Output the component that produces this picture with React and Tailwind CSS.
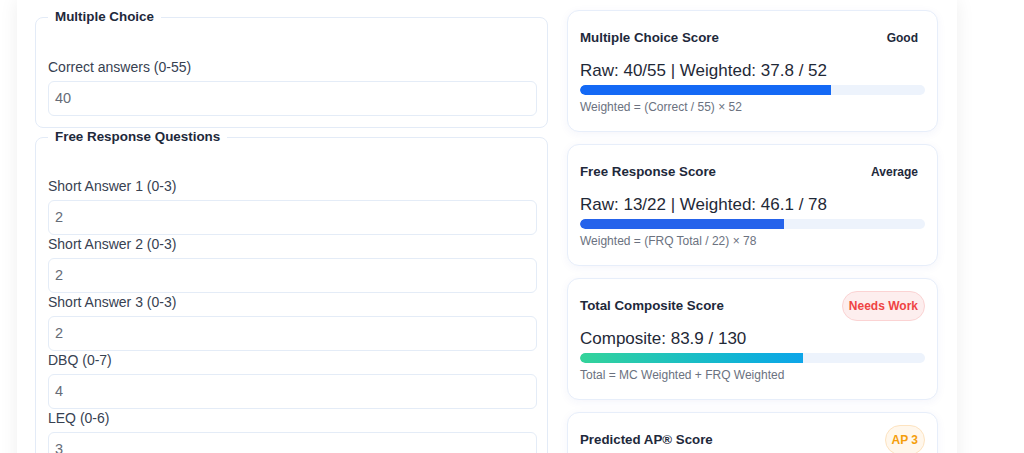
import React from 'react';

const font = { fontFamily: '"Liberation Sans", Arial, sans-serif' };

function Field({ label, value }) {
  return (
    <div className="mb-px">
      <label className="block text-[14px] leading-4 text-[#374151] mb-[6px]">{label}</label>
      <div className="h-[35px] w-full rounded-md border border-[#e4ecf7] bg-white px-[6px] flex items-center text-[14.5px] text-[#666c77]">
        {value}
      </div>
    </div>
  );
}

function Section({ title, className, children }) {
  return (
    <fieldset className={`rounded-lg border border-[#e3ebf7] pl-3 pr-[10px] pt-[32px] pb-[10px] ${className || ''}`}>
      <legend className="px-[7px] text-[13.4px] leading-5 font-bold text-[#1e293b]">{title}</legend>
      {children}
    </fieldset>
  );
}

function Badge({ text, tone }) {
  const tones = {
    plain: 'border-transparent bg-transparent text-[#1e293b]',
    red: 'border-[#fbd3d3] bg-[#fdeeee] text-[#ef4444]',
    amber: 'border-[#fde3c0] bg-[#fff7ec] text-[#f59e0b]',
  };
  return (
    <span className={`rounded-full border px-[6px] py-[6px] text-xs leading-4 font-bold ${tones[tone]}`}>
      {text}
    </span>
  );
}

function ScoreCard({ title, badge, tone, value, pct, bar, note }) {
  return (
    <div className="rounded-xl border border-[#e7eefa] bg-white px-3 pt-3 pb-4 shadow-[0_2px_10px_rgba(30,64,175,0.05)]">
      <div className="flex h-[30px] items-center justify-between">
        <h4 className="text-[13.3px] font-bold text-[#1e293b]">{title}</h4>
        <Badge text={badge} tone={tone} />
      </div>
      <div className="mt-1.5 text-[17px] leading-6 text-[#1f2937]">{value}</div>
      <div className="mt-0.5 h-2.5 w-full rounded-full bg-[#edf3fc] overflow-hidden">
        <div className={`h-full rounded-l-full ${bar}`} style={{ width: `${pct}%` }} />
      </div>
      <p className="mt-1 text-xs leading-4 text-[#6b7280]">{note}</p>
    </div>
  );
}

export default function App() {
  return (
    <div className="min-h-screen bg-white" style={font}>
      <div className="ml-[17px] w-[940px] bg-white px-[18px] pt-[7px] pb-6 shadow-[0_0_18px_rgba(0,0,0,0.07)]">
        <div className="grid grid-cols-[513px_371px] gap-[19px] items-start">
          <div className="flex flex-col">
            <Section title="Multiple Choice">
              <Field label="Correct answers (0-55)" value="40" />
            </Section>
            <Section title="Free Response Questions" className="-mt-px !pt-[31px]">
              <Field label="Short Answer 1 (0-3)" value="2" />
              <Field label="Short Answer 2 (0-3)" value="2" />
              <Field label="Short Answer 3 (0-3)" value="2" />
              <Field label="DBQ (0-7)" value="4" />
              <Field label="LEQ (0-6)" value="3" />
            </Section>
          </div>
          <div className="flex flex-col gap-3 pt-[3px]">
            <ScoreCard
              title="Multiple Choice Score"
              badge="Good"
              tone="plain"
              value="Raw: 40/55 | Weighted: 37.8 / 52"
              pct={72.7}
              bar="bg-[#1469f5]"
              note="Weighted = (Correct / 55) × 52"
            />
            <ScoreCard
              title="Free Response Score"
              badge="Average"
              tone="plain"
              value="Raw: 13/22 | Weighted: 46.1 / 78"
              pct={59.1}
              bar="bg-[#2563eb]"
              note="Weighted = (FRQ Total / 22) × 78"
            />
            <ScoreCard
              title="Total Composite Score"
              badge="Needs Work"
              tone="red"
              value="Composite: 83.9 / 130"
              pct={64.5}
              bar="bg-gradient-to-r from-[#34d399] to-[#0ea5e9]"
              note="Total = MC Weighted + FRQ Weighted"
            />
            <ScoreCard
              title="Predicted AP® Score"
              badge="AP 3"
              tone="amber"
              value="Score: 3"
              pct={60}
              bar="bg-[#f59e0b]"
              note="Based on composite score ranges"
            />
          </div>
        </div>
      </div>
    </div>
  );
}
